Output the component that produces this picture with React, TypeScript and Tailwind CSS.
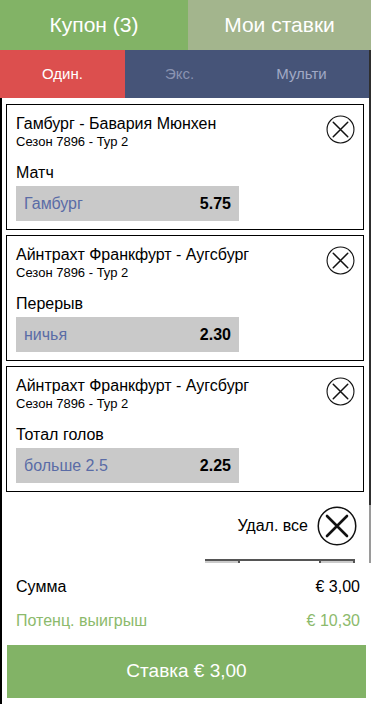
const bets = [
  { match: 'Гамбург - Бавария Мюнхен', market: 'Матч', pick: 'Гамбург', odds: '5.75' },
  { match: 'Айнтрахт Франкфурт - Аугсбург', market: 'Перерыв', pick: 'ничья', odds: '2.30' },
  { match: 'Айнтрахт Франкфурт - Аугсбург', market: 'Тотал голов', pick: 'больше 2.5', odds: '2.25' },
];

function CloseIcon({ size, stroke, cross }: { size: number; stroke: number; cross: number }) {
  const r = size / 2;
  const d = size * 0.25;
  return (
    <svg width={size} height={size} viewBox={`0 0 ${size} ${size}`} className="shrink-0">
      <circle cx={r} cy={r} r={r - stroke / 2 - 0.5} fill="none" stroke="#111" strokeWidth={stroke} />
      <path
        d={`M${r - d} ${r - d} L${r + d} ${r + d} M${r + d} ${r - d} L${r - d} ${r + d}`}
        stroke="#111"
        strokeWidth={cross}
        strokeLinecap="round"
      />
    </svg>
  );
}

function BetCard({ match, market, pick, odds }: (typeof bets)[number]) {
  return (
    <div className="ml-[4px] mr-[5px] flex border border-black pt-[9px] pb-[8px] pl-[9px] pr-[8px]">
      <div className="flex-1">
        <div className="text-[16px] leading-[20px] text-black">{match}</div>
        <div className="text-[13px] leading-[16px] text-black">Сезон 7896 - Тур 2</div>
        <div className="mt-[13px] text-[16px] leading-[20px] text-black">{market}</div>
        <div className="mt-[3px] flex h-[35px] w-[223px] items-center justify-between bg-[#c9c9c9] px-[8px] text-[16px]">
          <span className="text-[#5a6ca6]">{pick}</span>
          <span className="font-bold text-black">{odds}</span>
        </div>
      </div>
      <div className="mt-[1px]">
        <CloseIcon size={29} stroke={1.1} cross={1.5} />
      </div>
    </div>
  );
}

export default function App() {
  return (
    <div className="flex h-[704px] w-full flex-col overflow-hidden bg-white font-['Liberation_Sans',Arial,sans-serif]">
      {/* верхние вкладки */}
      <div className="flex h-[50px] text-[21px] text-white">
        <div className="flex w-[188px] items-center justify-center bg-[#82b366]">Купон (3)</div>
        <div className="flex flex-1 items-center justify-center bg-[#a3b58d]">Мои ставки</div>
      </div>

      <div className="flex h-[48px] text-[15px]">
        <div className="flex w-[125px] items-center justify-center bg-[#dc4f4e] text-white">Один.</div>
        <div className="flex w-[109px] items-center justify-center bg-[#465478] text-[#8a93b1]">Экс.</div>
        <div className="flex flex-1 items-center justify-center bg-[#465478] text-[#a1a9c5]">Мульти</div>
        <div className="w-[2px] bg-[#2e2e2e]" />
      </div>

      {/* список ставок */}
      <div className="flex h-[465px] border-l-2 border-black">
        <div className="flex-1 overflow-hidden pt-[6px]">
          <div className="flex flex-col gap-[5px]">
            {bets.map((b, i) => (
              <BetCard key={i} {...b} />
            ))}
          </div>
          <div className="mt-[14px] flex items-center justify-end gap-[9px] pr-[12px]">
            <span className="text-[16px] text-black">Удал. все</span>
            <CloseIcon size={40} stroke={1.5} cross={2.6} />
          </div>
          <div className="mt-[13px] flex justify-end pr-[14px]">
            <div className="flex h-[35px] border-t-2 border-[#555]">
              <div className="w-[35px] border-r-2 border-[#555] bg-[#cbcbcb]" />
              <div className="w-[79px] bg-white" />
              <div className="w-[36px] border-l-2 border-r-2 border-[#555] bg-[#cbcbcb]" />
            </div>
          </div>
        </div>
        <div className="flex w-[2px] flex-col">
          <div className="flex-1 bg-[#2e2e2e]" />
          <div className="h-[58px] bg-[#9a9a9a]" />
        </div>
      </div>

      {/* итог */}
      <div className="flex flex-1 flex-col border-l-2 border-black pt-[7px]">
        <div className="flex h-[34px] items-center justify-between pl-[14px] pr-[11px] text-[16px] text-black">
          <span>Сумма</span>
          <span>€ 3,00</span>
        </div>
        <div className="flex h-[34px] items-center justify-between pl-[14px] pr-[11px] text-[16px] text-[#8cba6c]">
          <span>Потенц. выигрыш</span>
          <span>€ 10,30</span>
        </div>
        <button className="mx-[5px] mt-[7px] flex h-[53px] items-center justify-center bg-[#82b366] text-[19px] text-white">
          Ставка € 3,00
        </button>
      </div>
    </div>
  );
}
